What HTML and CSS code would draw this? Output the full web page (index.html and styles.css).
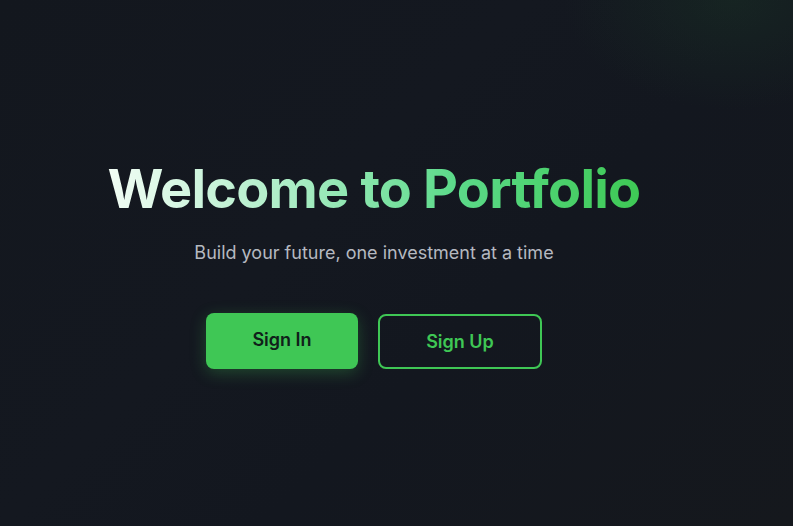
FILE: index.html
```html
<!DOCTYPE html>
<html lang="en">
<head>
<meta charset="utf-8">
<title>Portfolio</title>
<link rel="stylesheet" href="styles.css">
</head>
<body>
<div class="page">
  <div class="glow"></div>
  <main class="hero">
    <h1 class="title">Welcome to Portfolio</h1>
    <p class="subtitle">Build your future, one investment at a time</p>
    <div class="actions">
      <button class="btn btn-primary">Sign In</button>
      <button class="btn btn-outline">Sign Up</button>
    </div>
  </main>
</div>
</body>
</html>
```
FILE: styles.css
```css
html, body {
  margin: 0;
  padding: 0;
  height: 100%;
}
body {
  background: #13171e;
  font-family: Inter, "Noto Sans", sans-serif;
  overflow: hidden;
}
.page {
  position: relative;
  height: 526px;
  overflow: hidden;
  display: flex;
  align-items: center;
  background:
    linear-gradient(135deg, #13171e 0%, #141820 40%, #13171f 60%, #15181d 100%);
}
.glow {
  position: absolute;
  top: -110px;
  right: -110px;
  width: 340px;
  height: 220px;
  border-radius: 50%;
  background: radial-gradient(closest-side, rgba(28, 60, 40, 0.35), rgba(28, 60, 40, 0));
  pointer-events: none;
}
.hero {
  position: relative;
  width: 748px;
  display: flex;
  flex-direction: column;
  align-items: center;
  padding-top: 4px;
}
.title {
  margin: 0;
  font-size: 54px;
  font-weight: 700;
  letter-spacing: -0.015em;
  line-height: 56px;
  background: linear-gradient(90deg, #f2fdf5 0%, #a9ecc4 35%, #5cda8a 65%, #3ec955 100%);
  -webkit-background-clip: text;
  background-clip: text;
  color: transparent;
}
.subtitle {
  margin: 24px 0 0;
  font-size: 18px;
  color: #b5b9c0;
  line-height: 24px;
}
.actions {
  display: flex;
  gap: 20px;
  margin-top: 49px;
  align-items: center;
}
.btn {
  font-family: Inter, "Noto Sans", sans-serif;
  font-size: 18px;
  font-weight: 600;
  border-radius: 8px;
  height: 56px;
  cursor: pointer;
}
.btn-primary {
  width: 152px;
  background: #3fc755;
  color: #10201a;
  border: none;
  padding-bottom: 4px;
  box-shadow: 0 4px 16px rgba(63, 199, 85, 0.28);
  transform: translateY(-1px);
}
.btn-outline {
  width: 164px;
  height: 55px;
  background: transparent;
  color: #3fc755;
  border: 2px solid #3fc755;
}
```
